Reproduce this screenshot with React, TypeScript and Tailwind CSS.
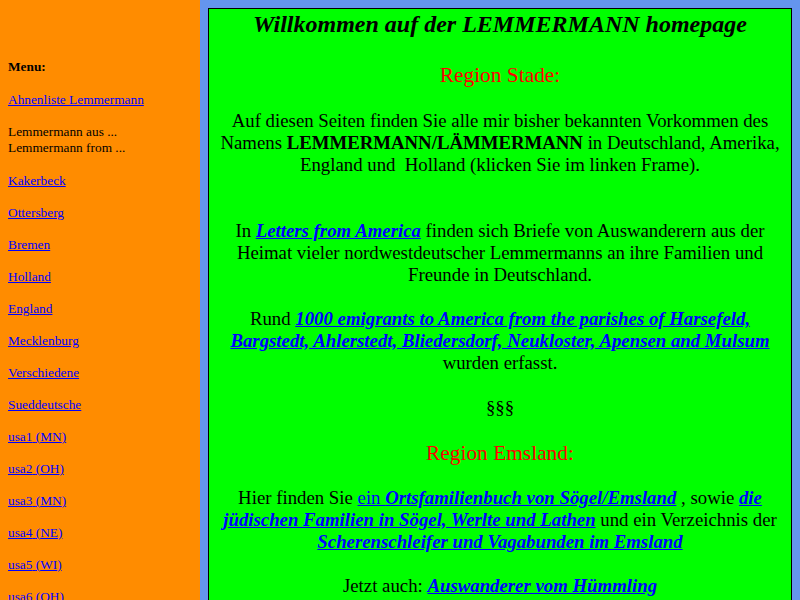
const menu: string[] = [
  'Kakerbeck',
  'Ottersberg',
  'Bremen',
  'Holland',
  'England',
  'Mecklenburg',
  'Verschiedene',
  'Sueddeutsche',
];

const usa = [
  ['usa1', 'MN'],
  ['usa2', 'OH'],
  ['usa3', 'MN'],
  ['usa4', 'NE'],
  ['usa5', 'WI'],
  ['usa6', 'OH'],
  ['usa7', 'IL'],
];

const serif = "font-['Liberation_Serif','Times_New_Roman',serif]";

function Link({ children, strong }: { children: React.ReactNode; strong?: boolean }) {
  return (
    <a href="#" className={`text-[#0000ff] underline ${strong ? 'font-bold italic' : ''}`}>
      {children}
    </a>
  );
}

function Menu() {
  return (
    <div className={`w-[200px] h-full shrink-0 bg-[#ff8c00] overflow-hidden px-2 pt-[59px] text-[13.33px] leading-[16px] text-black ${serif}`}>
      <p className="mb-[17px] font-bold">Menu:</p>
      <p className="mb-4">
        <Link>Ahnenliste Lemmermann</Link>
      </p>
      <p className="mb-[17px]">
        Lemmermann aus ...
        <br />
        Lemmermann from ...
      </p>
      {menu.map((m) => (
        <p key={m} className="mb-4">
          <Link>{m}</Link>
        </p>
      ))}
      {usa.map(([u, s]) => (
        <p key={u} className="mb-4">
          <Link>{u} </Link>
          <Link>({s})</Link>
        </p>
      ))}
    </div>
  );
}

function Main() {
  return (
    <div className="flex-1 h-full bg-[#6495ed] overflow-hidden p-2">
      <div className={`border border-black bg-[#00ff00] text-center text-black ${serif} text-[18.8px] leading-[22px] px-2 pb-8`}>
        <h1 className="text-[24px] leading-[28px] pt-[1px] font-bold italic">
          Willkommen auf der LEMMERMANN homepage
        </h1>
        <p className="mt-[25px] text-[#ff0000] text-[21.4px] leading-[24px]">Region Stade:</p>
        <p className="mt-[23px]">
          Auf diesen Seiten finden Sie alle mir bisher bekannten Vorkommen des Namens{' '}
          <b>LEMMERMANN/LÄMMERMANN</b> in Deutschland, Amerika, England und&nbsp; Holland (klicken Sie im linken
          Frame).
        </p>
        <p className="mt-[44px]">
          In <Link strong>Letters from America</Link> finden sich Briefe von Auswanderern aus der Heimat vieler
          nordwestdeutscher Lemmermanns an ihre Familien und Freunde in Deutschland.
        </p>
        <p className="mt-[22px]">
          Rund{' '}
          <Link strong>
            1000 emigrants to America from the parishes of Harsefeld, Bargstedt, Ahlerstedt, Bliedersdorf,
            Neukloster, Apensen and Mulsum
          </Link>{' '}
          wurden erfasst.
        </p>
        <p className="mt-[23px]">§§§</p>
        <p className="mt-[22px] text-[#ff0000] text-[21.4px] leading-[24px]">Region Emsland:</p>
        <p className="mt-[22px]">
          Hier finden Sie{' '}
          <a href="#" className="text-[#0000ff] underline">
            ein <span className="font-bold italic">Ortsfamilienbuch von Sögel/Emsland</span>
          </a>{' '}
          , sowie <Link strong>die jüdischen Familien in Sögel, Werlte und Lathen</Link> und ein Verzeichnis der{' '}
          <Link strong>Scherenschleifer und Vagabunden im Emsland</Link>
        </p>
        <p className="mt-[22px]">
          Jetzt auch: <Link strong>Auswanderer vom Hümmling</Link>
        </p>
      </div>
    </div>
  );
}

export default function App() {
  return (
    <div className="flex w-[800px] h-[600px] overflow-hidden">
      <Menu />
      <Main />
    </div>
  );
}
